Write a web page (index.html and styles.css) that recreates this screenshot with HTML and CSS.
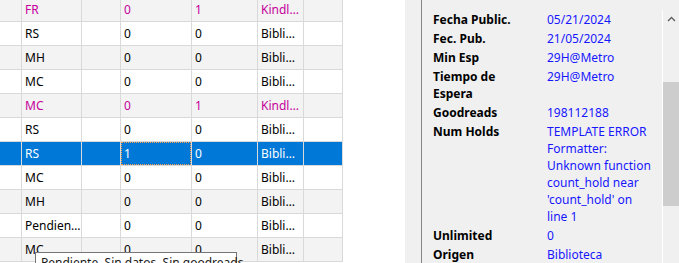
FILE: index.html
```html
<!DOCTYPE html>
<html lang="es">

<head>
  <meta charset="UTF-8" />
  <meta name="viewport" content="width=device-width, initial-scale=1.0" />
  <title>Biblioteca</title>
  <link rel="stylesheet" href="styles.css">
</head>

<body>
  <div class="window">
    <div class="list-pane">
      <div class="grid">
        <div class="row alt kindle">
          <div class="cell c0"></div><div class="cell c1">FR</div><div class="cell c2"></div><div class="cell c3">0</div><div class="cell c4">1</div><div class="cell c5">Kindl…</div><div class="cell c6"></div>
        </div>
        <div class="row">
          <div class="cell c0"></div><div class="cell c1">RS</div><div class="cell c2"></div><div class="cell c3">0</div><div class="cell c4">0</div><div class="cell c5">Bibli…</div><div class="cell c6"></div>
        </div>
        <div class="row alt">
          <div class="cell c0"></div><div class="cell c1">MH</div><div class="cell c2"></div><div class="cell c3">0</div><div class="cell c4">0</div><div class="cell c5">Bibli…</div><div class="cell c6"></div>
        </div>
        <div class="row">
          <div class="cell c0"></div><div class="cell c1">MC</div><div class="cell c2"></div><div class="cell c3">0</div><div class="cell c4">0</div><div class="cell c5">Bibli…</div><div class="cell c6"></div>
        </div>
        <div class="row alt kindle">
          <div class="cell c0"></div><div class="cell c1">MC</div><div class="cell c2"></div><div class="cell c3">0</div><div class="cell c4">1</div><div class="cell c5">Kindl…</div><div class="cell c6"></div>
        </div>
        <div class="row">
          <div class="cell c0"></div><div class="cell c1">RS</div><div class="cell c2"></div><div class="cell c3">0</div><div class="cell c4">0</div><div class="cell c5">Bibli…</div><div class="cell c6"></div>
        </div>
        <div class="row selected">
          <div class="cell c0"></div><div class="cell c1">RS</div><div class="cell c2"></div><div class="cell c3 focus">1</div><div class="cell c4">0</div><div class="cell c5">Bibli…</div><div class="cell c6"></div>
        </div>
        <div class="row">
          <div class="cell c0"></div><div class="cell c1">MC</div><div class="cell c2"></div><div class="cell c3">0</div><div class="cell c4">0</div><div class="cell c5">Bibli…</div><div class="cell c6"></div>
        </div>
        <div class="row alt">
          <div class="cell c0"></div><div class="cell c1">MH</div><div class="cell c2"></div><div class="cell c3">0</div><div class="cell c4">0</div><div class="cell c5">Bibli…</div><div class="cell c6"></div>
        </div>
        <div class="row">
          <div class="cell c0"></div><div class="cell c1">Pendien…</div><div class="cell c2"></div><div class="cell c3">0</div><div class="cell c4">0</div><div class="cell c5">Bibli…</div><div class="cell c6"></div>
        </div>
        <div class="row alt">
          <div class="cell c0"></div><div class="cell c1">MC</div><div class="cell c2"></div><div class="cell c3">0</div><div class="cell c4">0</div><div class="cell c5">Bibli…</div><div class="cell c6"></div>
        </div>
      </div>
      <div class="tooltip">Pendiente, Sin datos, Sin goodreads</div>
    </div>

    <div class="side-pane">
      <div class="details">
        <div class="info">
          <div class="label">Fecha Public.</div><div class="value">05/21/2024</div>
          <div class="label">Fec. Pub.</div><div class="value">21/05/2024</div>
          <div class="label">Min Esp</div><div class="value">29H@Metro</div>
          <div class="label">Tiempo de<br>Espera</div><div class="value">29H@Metro</div>
          <div class="label">Goodreads</div><div class="value">198112188</div>
          <div class="label">Num Holds</div><div class="value">TEMPLATE ERROR<br>Formatter:<br>Unknown function<br>count_hold near<br>'count_hold' on<br>line 1</div>
          <div class="label">Unlimited</div><div class="value">0</div>
          <div class="label">Origen</div><div class="value">Biblioteca</div>
        </div>
        <div class="scrollbar">
          <div class="arrow">
            <svg width="9" height="6" viewBox="0 0 9 6"><path d="M1 5 L4.5 1.5 L8 5" fill="none" stroke="#606060" stroke-width="1.4"/></svg>
          </div>
          <div class="thumb"></div>
        </div>
      </div>
    </div>
  </div>
</body>

</html>
```

FILE: styles.css
```css
body {
  margin: 0;
  padding: 0;
  font-family: "Noto Sans", "Open Sans", sans-serif;
  font-size: 12px;
  overflow: hidden;
}

.window {
  display: flex;
  width: 679px;
  height: 263px;
  overflow: hidden;
}

/* tabla de libros */
.list-pane {
  position: relative;
  width: 405px;
  background: #fff;
}

.grid {
  width: 343px;
  margin-top: -2px;
}

.row {
  display: flex;
  height: 24px;
  box-sizing: border-box;
  border-bottom: 1px solid #d9d9d9;
  background: #fff;
  color: #000;
}

.row.alt {
  background: #f3f3f3;
}

.row.kindle {
  color: #c5009c;
}

.row.selected {
  background: #0078d7;
  color: #fff;
}

.cell {
  position: relative;
  box-sizing: border-box;
  border-right: 1px solid #d9d9d9;
  padding-left: 3px;
  line-height: 23px;
  white-space: nowrap;
  overflow: hidden;
}

.c0 { width: 22px; }
.c1 { width: 60px; }
.c2 { width: 39px; }
.c3 { width: 71px; }
.c4 { width: 66px; }
.c5 { width: 46px; }
.c6 { width: 39px; }

.cell.focus::after {
  content: "";
  position: absolute;
  inset: 0;
  border: 1px dotted #f6a04d;
}

.tooltip {
  position: absolute;
  left: 35px;
  top: 252px;
  width: 195px;
  padding: 2px 0 2px 5px;
  border: 1px solid #767676;
  background: #fff;
  color: #1a1a1a;
  line-height: 16px;
  white-space: nowrap;
}

/* panel de detalles */
.side-pane {
  flex: 1;
  padding-left: 16px;
  background: #f0f0f0;
}

.details {
  display: flex;
  height: 100%;
  border-left: 1px solid #858585;
}

.info {
  flex: 1;
  display: grid;
  grid-template-columns: 114px 1fr;
  align-content: start;
  padding: 10px 0 0 11px;
  line-height: 17px;
}

.label,
.value {
  padding: 1px 0;
}

.label {
  font-weight: bold;
  color: #000;
}

.value {
  color: #1717ff;
}

.scrollbar {
  width: 16px;
  margin-top: 10px;
  border-left: 1px solid #fff;
  background: #f0f0f0;
}

.arrow {
  display: flex;
  justify-content: center;
  align-items: center;
  height: 17px;
}

.thumb {
  margin-top: 55px;
  height: 124px;
  background: #cdcdcd;
}
```
